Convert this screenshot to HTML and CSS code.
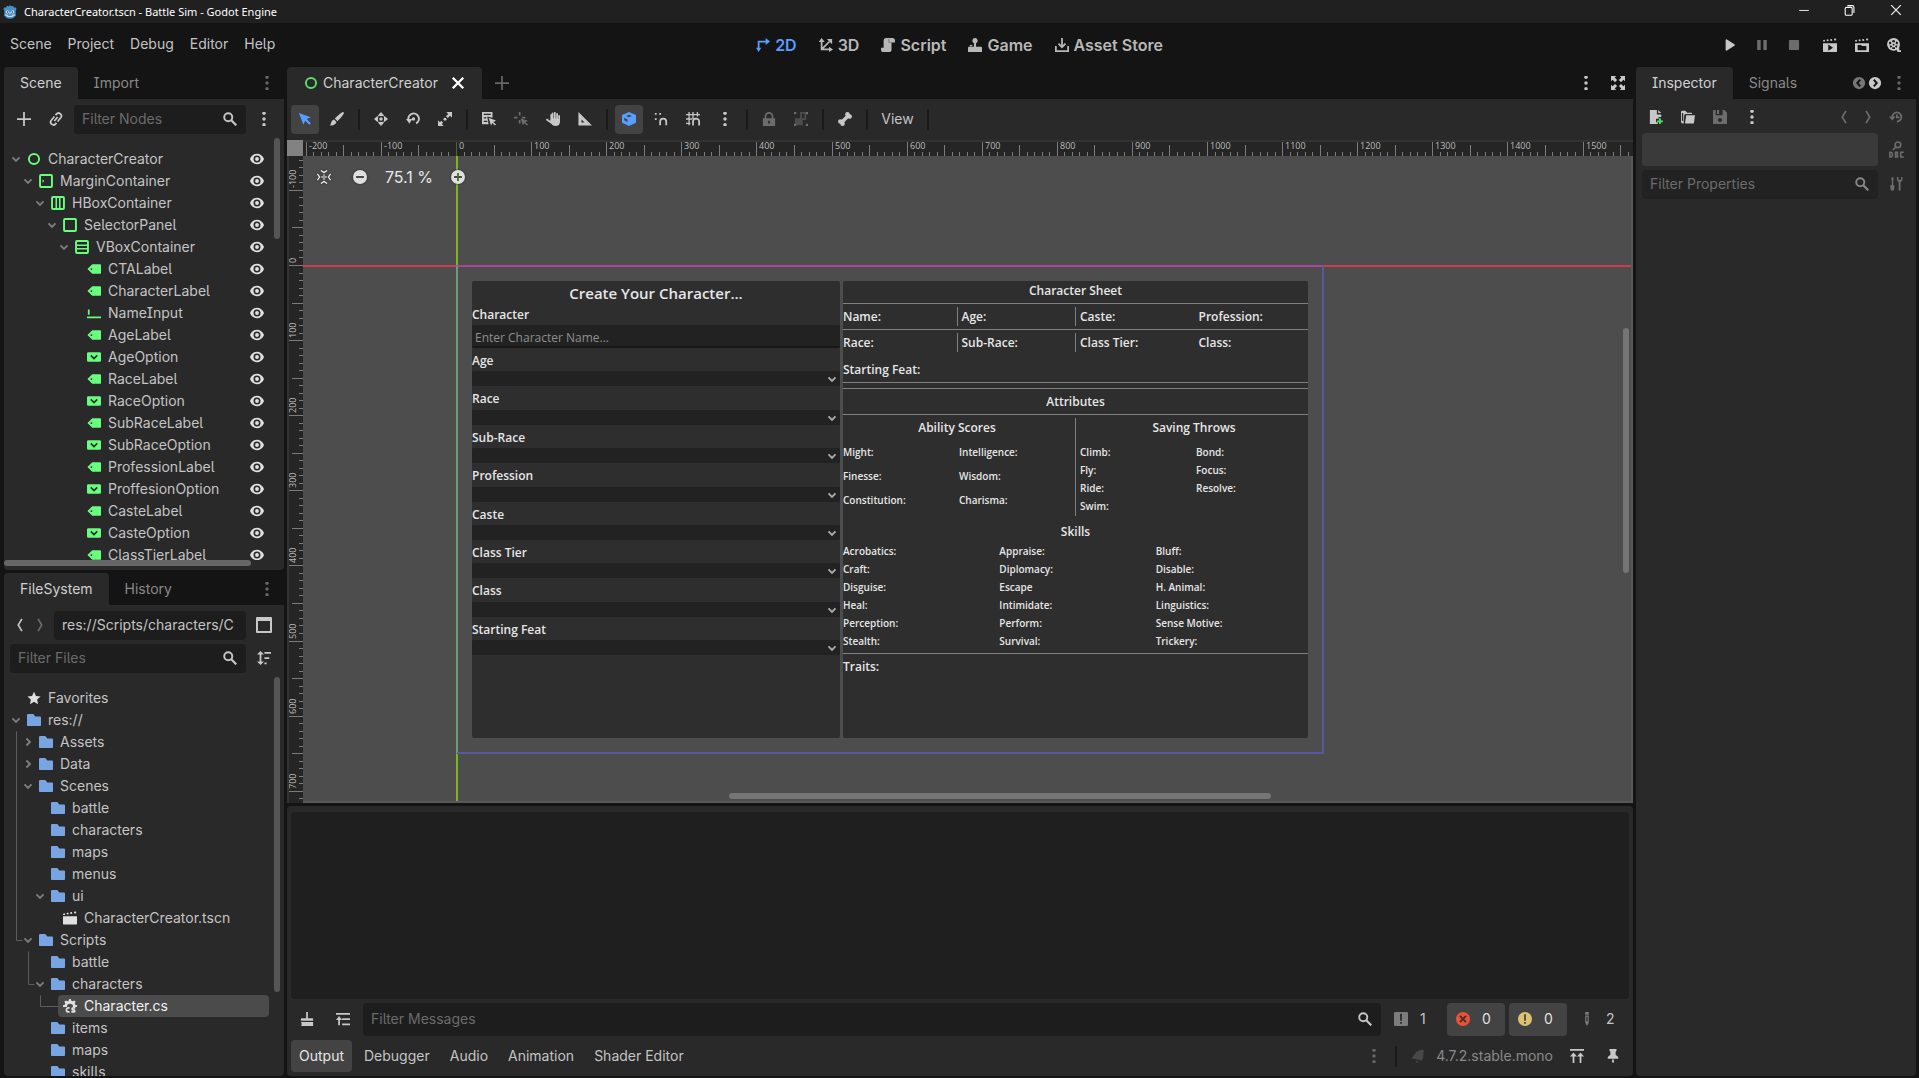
FILE: index.html
```html
<!DOCTYPE html>
<html lang="en">
<head>
<meta charset="utf-8">
<title>CharacterCreator.tscn - Battle Sim - Godot Engine</title>
<link rel="stylesheet" href="styles.css">
</head>
<body>
<svg class="sprite" aria-hidden="true">
  <symbol id="i-root" viewBox="0 0 16 16"><circle cx="8" cy="8" r="5.8" fill="none" stroke="currentColor" stroke-width="2.2"/></symbol>
  <symbol id="i-margin" viewBox="0 0 16 16"><rect x="1.2" y="1.2" width="13.6" height="13.6" rx="1" fill="none" stroke="currentColor" stroke-width="2.2"/><path d="M4 6l2 2-2 2z" fill="currentColor"/></symbol>
  <symbol id="i-hbox" viewBox="0 0 16 16"><rect x="1.2" y="1.2" width="13.6" height="13.6" rx="1" fill="none" stroke="currentColor" stroke-width="2.2"/><path d="M6 2v12M10 2v12" stroke="currentColor" stroke-width="1.8"/></symbol>
  <symbol id="i-panel" viewBox="0 0 16 16"><rect x="1.2" y="1.2" width="13.6" height="13.6" rx="1" fill="none" stroke="currentColor" stroke-width="2.2"/></symbol>
  <symbol id="i-vbox" viewBox="0 0 16 16"><rect x="1.2" y="1.2" width="13.6" height="13.6" rx="1" fill="none" stroke="currentColor" stroke-width="2.2"/><path d="M2 6h12M2 10h12" stroke="currentColor" stroke-width="1.8"/></symbol>
  <symbol id="i-label" viewBox="0 0 16 16"><path fill="currentColor" fill-rule="evenodd" d="M6 2.500L.5 8 6 13.500h9a1 1 0 001-1v-9a1 1 0 00-1-1zM5 7a1 1 0 110 2 1 1 0 010-2z"/></symbol>
  <symbol id="i-line" viewBox="0 0 16 16"><path fill="currentColor" d="M1 4h2v6H1zM0 12h16v2H0z"/></symbol>
  <symbol id="i-option" viewBox="0 0 16 16"><path fill="currentColor" fill-rule="evenodd" d="M1.500 2.500h13A1.500 1.500 0 0116 4v8a1.500 1.500 0 01-1.500 1.500h-13A1.500 1.500 0 010 12V4a1.500 1.500 0 011.500-1.500zM5 5.500L3.700 6.800 8 11l4.300-4.200L11 5.500l-3 3z"/></symbol>
  <symbol id="i-eye" viewBox="0 0 16 16"><path fill="currentColor" fill-rule="evenodd" d="M8 2C4.600 2 1.300 4.300 0 8c1.300 3.700 4.600 6 8 6s6.700-2.300 8-6C14.700 4.300 11.400 2 8 2zM8 4a4 4 0 110 8 4 4 0 010-8z"/><circle cx="8" cy="8" r="2.200" fill="currentColor"/></symbol>
  <symbol id="i-down" viewBox="0 0 16 16"><path d="M4 6.200l4 4 4-4" fill="none" stroke="currentColor" stroke-width="2.200"/></symbol>
  <symbol id="i-right" viewBox="0 0 16 16"><path d="M6.200 4l4 4-4 4" fill="none" stroke="currentColor" stroke-width="2.200"/></symbol>
  <symbol id="i-back" viewBox="0 0 16 16"><path d="M10.200 1L6 8l4.200 7" fill="none" stroke="currentColor" stroke-width="1.900"/></symbol>
  <symbol id="i-next" viewBox="0 0 16 16"><path d="M5.800 1L10 8l-4.200 7" fill="none" stroke="currentColor" stroke-width="1.900"/></symbol>
  <symbol id="i-dots" viewBox="0 0 16 16"><g fill="currentColor"><circle cx="8" cy="1.500" r="2"/><circle cx="8" cy="8" r="2"/><circle cx="8" cy="14.500" r="2"/></g></symbol>
  <symbol id="i-plus" viewBox="0 0 16 16"><path d="M8 0v16M0 8h16" stroke="currentColor" stroke-width="2"/></symbol>
  <symbol id="i-link" viewBox="0 0 16 16"><g transform="rotate(-50 8 8)" fill="none" stroke="currentColor" stroke-width="2"><path d="M9 4.800H3.500a3.200 3.200 0 000 6.400H5M7 11.200h5.500a3.200 3.200 0 000-6.400H11M5 8h6"/></g></symbol>
  <symbol id="i-search" viewBox="0 0 16 16"><circle cx="6" cy="6" r="4.600" fill="none" stroke="currentColor" stroke-width="2.200"/><path d="M9.200 9.200l6 6" stroke="currentColor" stroke-width="2.600"/></symbol>
  <symbol id="i-window" viewBox="0 0 16 16"><path fill="currentColor" fill-rule="evenodd" d="M1 0h14a1 1 0 011 1v14a1 1 0 01-1 1H1a1 1 0 01-1-1V1a1 1 0 011-1zM2 4v10h12V4z"/></symbol>
  <symbol id="i-sort" viewBox="0 0 16 16"><path fill="currentColor" d="M4 0l4 4H5v8h3l-4 4-4-4h3V4H0zM8.500 1H16v2H8.500zM8.500 7H14v2H8.500zM8.500 13H11v2H8.500z"/></symbol>
  <symbol id="i-star" viewBox="0 0 16 16"><path fill="currentColor" d="M8 .8l2.200 4.800 5.300.6-3.900 3.600 1 5.200L8 12.400 3.400 15l1-5.200L.5 6.200l5.300-.6z"/></symbol>
  <symbol id="i-folder" viewBox="0 0 16 16"><path fill="currentColor" d="M1.200 1h6L9.500 4H15a1 1 0 011 1v9a.8.8 0 01-.8.8H.8A.8.8 0 010 14V2.200A1.200 1.200 0 011.200 1z"/></symbol>
  <symbol id="i-clap" viewBox="0 0 16 16"><path fill="currentColor" d="M0 6h16v8.500a1 1 0 01-1 1H1a1 1 0 01-1-1zM0 3l2-.5.5 2H.3zM4 2.200l2-.5.5 2-2 .3zM8.200 1.500l2-.4.4 2-2 .3zM12.500.8L15 .5v2l-2 .3z"/></symbol>
  <symbol id="i-cs" viewBox="0 0 16 16"><path fill="currentColor" d="M7 0h2l.5 2 1.500.6L12.800 1.600l1.600 1.600L13.400 5l.6 1.500 2 .5v2h-4.500a3.500 3.500 0 00-7 0H0V7l2-.5L2.600 5 1.600 3.200l1.600-1.600L5 2.600 6.500 2z"/><path d="M7.500 10.200H6A2 2 0 004 12.500 2 2 0 006 14.800h1.500M14 10.200h-2.500c-1.500 0-1.500 2.200 0 2.200h.8c1.500 0 1.500 2.400 0 2.400H9.500" fill="none" stroke="currentColor" stroke-width="2"/></symbol>
  <symbol id="i-2d" viewBox="0 0 16 16"><path d="M3 12V4h9" fill="none" stroke="currentColor" stroke-width="2"/><path fill="currentColor" d="M11 0l5 4-5 4zM0 11l3 5 3-5z"/></symbol>
  <symbol id="i-3d" viewBox="0 0 16 16"><path d="M3 3v10h10M3 13l9-9" fill="none" stroke="currentColor" stroke-width="2"/><path fill="currentColor" d="M3 0l3.500 4.500h-7zM16 13l-4.500 3v-6zM15 1v6L9 1z"/></symbol>
  <symbol id="i-script" viewBox="0 0 16 16"><path fill="currentColor" d="M6 0h7a3 3 0 013 3v2h-4v8a3 3 0 01-3 3H3a3 3 0 01-3-3v-2h3V3a3 3 0 013-3z"/><path d="M9 1v4h3" fill="none" stroke="#777" stroke-width="1"/></symbol>
  <symbol id="i-game" viewBox="0 0 16 16"><path fill="currentColor" d="M8 0a3.200 3.200 0 011.200 6.100V10H15a1 1 0 011 1v5H0v-5a1 1 0 011-1h5.800V6.100A3.200 3.200 0 018 0zM2 8h3v1.500H2z"/></symbol>
  <symbol id="i-asset" viewBox="0 0 16 16"><path d="M1 9v6h14V9M8 0v10M4 6.500l4 4 4-4" fill="none" stroke="currentColor" stroke-width="2"/></symbol>
  <symbol id="i-play" viewBox="0 0 16 16"><path fill="currentColor" d="M3 2.500a1 1 0 011.500-.8l8.500 5.400a1 1 0 010 1.700l-8.500 5.400A1 1 0 013 13.500z"/></symbol>
  <symbol id="i-pause" viewBox="0 0 16 16"><path fill="currentColor" d="M2.500 2.200h4v11.600h-4zM9.500 2.200h4v11.600h-4z"/></symbol>
  <symbol id="i-stop" viewBox="0 0 16 16"><rect x="2.200" y="2.200" width="11.600" height="11.600" rx="1" fill="currentColor"/></symbol>
  <symbol id="i-playscene" viewBox="0 0 16 16"><path fill="currentColor" fill-rule="evenodd" d="M0 6h16v9a1 1 0 01-1 1H1a1 1 0 01-1-1zM6 7.500v7l5.500-3.500zM0 2.500L2 2l.5 2H.3zM4 2l2-.5.5 2-2 .3zM8.200 1.500l2-.4.4 2-2 .3zM12.500.8L15 .5v2l-2 .3z"/></symbol>
  <symbol id="i-playfolder" viewBox="0 0 16 16"><path fill="currentColor" fill-rule="evenodd" d="M0 6h16v9a1 1 0 01-1 1H1a1 1 0 01-1-1zM3 8v6h10V9H8L7 8zM0 2.500L2 2l.5 2H.3zM4 2l2-.5.5 2-2 .3zM8.200 1.500l2-.4.4 2-2 .3zM12.500.8L15 .5v2l-2 .3z"/></symbol>
  <symbol id="i-movie" viewBox="0 0 16 16"><path fill="currentColor" fill-rule="evenodd" d="M7.500 0A7.300 7.300 0 0114 10.500V14h2v2h-3.500a2 2 0 01-1.200-2.500A7.300 7.300 0 117.500 0zM6 2.500v2.300h3V2.500zM2.500 4.500v2.800l2.500-.8-.7-2.500zM10.500 4l-.7 2.500 2.500.8V4.500zM7.500 6.500a1 1 0 100 2 1 1 0 000-2zM3 8.700l1.200 2.600L6 9.500l-1.200-1zM10.200 8.500L9 9.500l1.800 1.800L12 8.700zM6 10.500v2h3v-2z"/></symbol>
  <symbol id="i-close" viewBox="0 0 16 16"><path d="M2 2l12 12M14 2L2 14" stroke="currentColor" stroke-width="2.700"/></symbol>
  <symbol id="i-full" viewBox="0 0 16 16"><path fill="currentColor" d="M0 0h6L4.200 1.800 7 4.600 4.600 7 1.800 4.200 0 6zM16 0v6l-1.800-1.800L11.400 7 9 4.600l2.800-2.800L10 0zM0 16v-6l1.800 1.800L4.600 9 7 11.400l-2.800 2.800L6 16zM16 16h-6l1.800-1.800L9 11.400 11.400 9l2.800 2.800L16 10z"/></symbol>
  <symbol id="i-select" viewBox="0 0 16 16"><path fill="currentColor" d="M1 1l5.200 13.500 2-4.600 4.700 4.700 1.800-1.800-4.700-4.700 4.600-2z"/></symbol>
  <symbol id="i-brush" viewBox="0 0 16 16"><path fill="currentColor" d="M14.500 0c.8 0 1.500.8 1.500 1.500C14 5 11 8.500 8.500 10.500l-3-3C8 4.500 11.500 1.800 14.500 0zM4.600 8.600l2.800 2.800C6.500 14.500 3.500 15.500 0 15.500c1.500-2 1-6 4.600-6.900z"/></symbol>
  <symbol id="i-move" viewBox="0 0 16 16"><path fill="currentColor" d="M8 0l3.200 3.600v1.200H4.800V3.600zM8 16l-3.200-3.600v-1.200h6.400v1.200zM0 8l3.600-3.200h1.200v6.400H3.600zM16 8l-3.600 3.200h-1.200V4.800h1.200z"/><circle cx="8" cy="8" r="3.400" fill="#292929"/><circle cx="8" cy="8" r="2" fill="currentColor"/></symbol>
  <symbol id="i-rotate" viewBox="0 0 16 16"><path d="M3 9.500A6 6 0 1111.500 13" fill="none" stroke="currentColor" stroke-width="2.200"/><path fill="currentColor" d="M0 8h7l-3 5.500z"/><circle cx="8.500" cy="8" r="2" fill="currentColor"/></symbol>
  <symbol id="i-scale" viewBox="0 0 16 16"><path fill="currentColor" d="M9.500 0H16v6.500l-2.200-2.200-2.600 2.600-2.100-2.100 2.600-2.600zM0 9.500l2.200 2.200 1.600-1.600 2.100 2.100-1.600 1.600L6.500 16H0z"/><circle cx="8" cy="8.300" r="1.700" fill="currentColor"/></symbol>
  <symbol id="i-list" viewBox="0 0 16 16"><path fill="currentColor" fill-rule="evenodd" d="M0 0h12v6.500L6 5l1.500 9H0zM2 2v1.500h8V2zM2 6v1.500h3V6zM2 10v1.500h4V10z"/><path fill="currentColor" d="M7.500 6.500l2.800 9 1.500-3 3 3 1.200-1.200-3-3 3-1.500z"/></symbol>
  <symbol id="i-pivot" viewBox="0 0 16 16"><path d="M6.500 0v4M0 6.500h4M9 6.500h4M6.500 9v4" stroke="currentColor" stroke-width="2"/><path fill="currentColor" d="M7.500 7.500l2.800 8 1.500-3 3 3 1.200-1.200-3-3 3-1.300z"/></symbol>
  <symbol id="i-hand" viewBox="0 0 16 16"><path fill="currentColor" d="M6.500 1.500a1 1 0 012 0V7h.6V.9a1 1 0 012 0V7h.6V2a1 1 0 012 0v6h.3V4.500a1 1 0 012 0V11c0 3-2 5-5 5-2.500 0-3.500-.5-5-2.500L.3 9.300c-.6-1 .8-2 1.700-1.200L4.600 10l.4-.5V2.800a1 1 0 011.500-.3z"/></symbol>
  <symbol id="i-ruler" viewBox="0 0 16 16"><path fill="currentColor" fill-rule="evenodd" d="M.5 0L16 15.500H.5zM4 8.500V12h3.500z"/></symbol>
  <symbol id="i-cube" viewBox="0 0 16 16"><path fill="currentColor" fill-rule="evenodd" d="M8 0l8 3.500v8.800L8 16 0 12.300V3.500zM2.500 6.500v3l3.800 1.900V8.600zM8 3L4.800 4.500 8 6l3.200-1.500z"/></symbol>
  <symbol id="i-snap" viewBox="0 0 16 16"><path d="M7 15v-4a3.500 3.500 0 017 0v4" fill="none" stroke="currentColor" stroke-width="2"/><path fill="currentColor" d="M1 1h2v2H1zM6 1h2v2H6zM1 7h2v2H1z"/></symbol>
  <symbol id="i-grid" viewBox="0 0 16 16"><path d="M3.500 0v15M8 0v8M13 0v5M0 3h16M0 8h7M0 13h5" stroke="currentColor" stroke-width="1.500" fill="none"/><path d="M8 15.500V11a3.500 3.500 0 017 0v4.500" fill="none" stroke="currentColor" stroke-width="2"/></symbol>
  <symbol id="i-lock" viewBox="0 0 16 16"><path fill="currentColor" fill-rule="evenodd" d="M8 0a5 5 0 015 5v2h2v9H1V7h2V5a5 5 0 015-5zM8 2a3 3 0 00-3 3v2h6V5a3 3 0 00-3-3zM7 10v3h2v-3z"/></symbol>
  <symbol id="i-group" viewBox="0 0 16 16"><path fill="currentColor" d="M0 0h2.500v2.500H0zM13.500 0H16v2.500h-2.500zM0 13.500h2.500V16H0zM13.500 13.500H16V16h-2.500z"/><path fill="currentColor" opacity=".55" fill-rule="evenodd" d="M7 0h7v9h-4v6H1V7h6zM9 2v5h3V2z"/></symbol>
  <symbol id="i-bone" viewBox="0 0 16 16"><path d="M4.500 11.500l7-7" stroke="currentColor" stroke-width="4"/><g fill="currentColor"><circle cx="10.800" cy="2.700" r="2.600"/><circle cx="13.300" cy="5.200" r="2.600"/><circle cx="2.700" cy="10.800" r="2.600"/><circle cx="5.200" cy="13.300" r="2.600"/></g></symbol>
  <symbol id="i-center" viewBox="0 0 16 16"><path d="M.5 4.500L3 8 .5 11.500M15.500 4.500L13 8l2.500 3.500M4.500.5L8 3 11.500.5M4.500 15.500L8 13l3.500 2.500" fill="none" stroke="currentColor" stroke-width="1.500"/><path fill="currentColor" d="M5 7.200h1.600v1.600H5zM7.200 7.200h1.600v1.600H7.200zM9.400 7.200H11v1.600H9.400zM7.200 5h1.600v1.600H7.200zM7.200 9.400h1.600V11H7.200z"/></symbol>
  <symbol id="i-zoomout" viewBox="0 0 16 16"><circle cx="8" cy="8" r="8" fill="#e0e0e0"/><path d="M3.500 8h9" stroke="#333" stroke-width="2"/></symbol>
  <symbol id="i-zoomin" viewBox="0 0 16 16"><circle cx="8" cy="8" r="8" fill="#e0e0e0"/><path d="M3.500 8h9" stroke="#333" stroke-width="2"/><path d="M8 3.500v9" stroke="#4a6b12" stroke-width="2"/></symbol>
  <symbol id="i-cleft" viewBox="0 0 16 16"><path fill="currentColor" fill-rule="evenodd" d="M8 1a7 7 0 110 14A7 7 0 018 1zM8.500 3.500L4.500 8l4 4.500 1.700-1.500L7.500 8l2.700-3z"/></symbol>
  <symbol id="i-cright" viewBox="0 0 16 16"><path fill="currentColor" fill-rule="evenodd" d="M8 1a7 7 0 110 14A7 7 0 018 1zM7.500 3.500L5.800 5l2.700 3-2.700 3 1.700 1.500 4-4.500z"/></symbol>
  <symbol id="i-new" viewBox="0 0 16 16"><path fill="currentColor" d="M1 0h8v5h5v3h-3v2H8v4h2v2H1zM10.500 0L14 3.500h-3.500z"/><path d="M12.500 9.500v7M9 13h7" stroke="#45e05c" stroke-width="2.200"/></symbol>
  <symbol id="i-open" viewBox="0 0 16 16"><path fill="currentColor" d="M0 2.500C0 1 1 .8 2 .8h3L7 3h5.500v1.500H5.500C4 4.500 3.800 6 3.600 7L3 15.500C1 15.500 0 14.500 0 13zM6 6h10l-1.200 8.500a1.200 1.200 0 01-1.200 1H4.500z"/><path d="M1.800 3.500v9" stroke="#292929" stroke-width="1.600"/></symbol>
  <symbol id="i-save" viewBox="0 0 16 16"><path fill="currentColor" fill-rule="evenodd" d="M1 0h2v6h8V0h2l3 3v12a1 1 0 01-1 1H1a1 1 0 01-1-1V1a1 1 0 011-1zM8 9a2.300 2.300 0 100 4.600A2.300 2.300 0 008 9zM4.500 0H7v4.500H4.500z"/></symbol>
  <symbol id="i-history" viewBox="0 0 16 16"><path d="M3.800 8a5.200 5.200 0 115.200 5.200M9 5v3.500h3" fill="none" stroke="currentColor" stroke-width="2"/><path fill="currentColor" d="M0 7.500h7.500L3.800 12z"/></symbol>
  <symbol id="i-doc" viewBox="0 0 16 18"><circle cx="9.500" cy="4" r="3" fill="none" stroke="currentColor" stroke-width="1.800"/><path d="M7.500 6.200L4 9.500M.9 12v5H2a1.600 1.600 0 001.600-1.600v-1.800A1.600 1.600 0 002 12zM7 12h2v5H7zM15.800 12h-3.300v5h3.300" fill="none" stroke="currentColor" stroke-width="1.700"/></symbol>
  <symbol id="i-tools" viewBox="0 0 16 16"><path fill="currentColor" d="M3.200 0h1.600l.6 3-.6 1v5H6v4.500a2.200 2.200 0 01-4.400 0V9h1.600V4l-.6-1zM9 0v3.500L11 6v9.500h2.200V6L15.500 3.500V0h-1.700v3h-3V0z"/></symbol>
  <symbol id="i-clear" viewBox="0 0 16 16"><path fill="currentColor" d="M7 0h2v7h5a1 1 0 011 1v2H1V8a1 1 0 011-1h5zM1 11.500h14L15 16H1c1.300-1 1-3 0-4.500z"/></symbol>
  <symbol id="i-collapse" viewBox="0 0 16 16"><path fill="currentColor" d="M0 1h16v2H0zM7 7h9v2H7zM7 13h9v2H7zM3.500 4.500L7 9H4.500v6h-2V9H0z"/></symbol>
  <symbol id="i-msg" viewBox="0 0 16 16"><path fill="currentColor" fill-rule="evenodd" d="M1.500 0h13A1.500 1.500 0 0116 1.500v13a1.500 1.500 0 01-1.500 1.500h-13A1.500 1.500 0 010 14.500v-13A1.500 1.500 0 011.500 0zM7 2v8h2V2zM7 11.500v2h2v-2z"/></symbol>
  <symbol id="i-error" viewBox="0 0 16 16"><circle cx="8" cy="8" r="8" fill="#ec5038"/><path d="M4.500 4.500l7 7M11.500 4.500l-7 7" stroke="#43302e" stroke-width="2.200"/></symbol>
  <symbol id="i-warn" viewBox="0 0 16 16"><circle cx="8" cy="8" r="8" fill="#dcc170"/><path d="M7 2.500h2v7.500H7zM7 11.500h2v2H7z" fill="#444"/></symbol>
  <symbol id="i-pen" viewBox="0 0 16 16"><path fill="currentColor" fill-rule="evenodd" d="M6 0h4v3H6zM6 4h4v8l-2 4-2-4zM7.300 5.500v5h1.400v-5z"/></symbol>
  <symbol id="i-bell" viewBox="0 0 16 16"><path fill="currentColor" d="M12.500.5l2 1-.5 8-1.500 3.500L0 10.500C4 9 4.500 2 10.500 1.500zM5 13l4 1.500c-1 2-4 1-4-1.500z"/></symbol>
  <symbol id="i-expand" viewBox="0 0 16 16"><path fill="currentColor" d="M0 0h16v2H0zM4 4l4 4.500H5V16H3V8.500H0zM12 4l4 4.500h-3V16h-2V8.500H8z"/></symbol>
  <symbol id="i-pin" viewBox="0 0 16 16"><path fill="currentColor" d="M4 0h8v2l-1 1v3.500l3 2.500v2H2V9l3-2.500V3L4 2zM7 12h2v3l-1 1-1-1z"/></symbol>
  <symbol id="i-godot" viewBox="0 0 16 16"><path fill="#4a90c8" d="M4.500.8L7 1.800V.5h2v1.300l2.500-1 1 2.200 1.800-.3 1.200 2-1 2V12c-1.500 2.500-4 3.700-6.500 3.700S3 14.500 1.500 12V6.700l-1-2 1.200-2 1.800.3z"/><g fill="#e8eef4"><circle cx="5" cy="8" r="1.700"/><circle cx="11" cy="8" r="1.700"/><path d="M7.500 8h1v2.500h-1z"/></g><path d="M2 11.500h3v1.500h6v-1.500h3" fill="none" stroke="#e8eef4" stroke-width="1"/><g fill="#333"><circle cx="5.200" cy="8" r=".9"/><circle cx="10.800" cy="8" r=".9"/></g></symbol>
  <symbol id="i-min" viewBox="0 0 16 16"><path d="M2.500 8.500h11" stroke="currentColor"/></symbol>
  <symbol id="i-restore" viewBox="0 0 16 16"><rect x="2.500" y="5" width="8" height="9" rx="1.500" fill="none" stroke="currentColor" stroke-width="1.200"/><path d="M5 3h5.500a2 2 0 012 2v6.500" fill="none" stroke="currentColor" stroke-width="1.200"/></symbol>
  <symbol id="i-x" viewBox="0 0 16 16"><path d="M2.500 2.500l11 11M13.500 2.500l-11 11" stroke="currentColor" stroke-width="1.200"/></symbol>
</svg>

<header class="titlebar">
  <svg class="icon"><use href="#i-godot"/></svg>
  <span class="window-title">CharacterCreator.tscn - Battle Sim - Godot Engine</span>
  <button class="win-btn" aria-label="Minimize"><svg class="icon"><use href="#i-min"/></svg></button>
  <button class="win-btn" aria-label="Restore"><svg class="icon"><use href="#i-restore"/></svg></button>
  <button class="win-btn" aria-label="Close"><svg class="icon"><use href="#i-x"/></svg></button>
</header>

<div class="menubar">
  <nav class="menus">
    <button>Scene</button><button>Project</button><button>Debug</button><button>Editor</button><button>Help</button>
  </nav>
  <nav class="screens">
    <button class="active"><svg class="icon"><use href="#i-2d"/></svg>2D</button>
    <button><svg class="icon"><use href="#i-3d"/></svg>3D</button>
    <button><svg class="icon"><use href="#i-script"/></svg>Script</button>
    <button><svg class="icon"><use href="#i-game"/></svg>Game</button>
    <button><svg class="icon"><use href="#i-asset"/></svg>Asset Store</button>
  </nav>
  <div class="runbar">
    <button class="tool" aria-label="Play"><svg class="icon"><use href="#i-play"/></svg></button>
    <button class="tool off" aria-label="Pause"><svg class="icon"><use href="#i-pause"/></svg></button>
    <button class="tool off" aria-label="Stop"><svg class="icon"><use href="#i-stop"/></svg></button>
    <span class="run-gap"></span>
    <button class="tool" aria-label="Play scene"><svg class="icon"><use href="#i-playscene"/></svg></button>
    <button class="tool" aria-label="Play custom scene"><svg class="icon"><use href="#i-playfolder"/></svg></button>
    <button class="tool" aria-label="Movie maker"><svg class="icon"><use href="#i-movie"/></svg></button>
  </div>
</div>

<main class="workspace">
  <div class="column">
    <section class="dock">
      <div class="tabs">
        <button class="tab active">Scene</button><button class="tab">Import</button>
        <button class="tool faint push" aria-label="Dock options"><svg class="icon"><use href="#i-dots"/></svg></button>
      </div>
      <div class="dock-body">
        <div class="dock-row first">
          <button class="tool" aria-label="Add node"><svg class="icon"><use href="#i-plus"/></svg></button>
          <button class="tool" aria-label="Instantiate scene"><svg class="icon"><use href="#i-link"/></svg></button>
          <label class="field"><input type="text" placeholder="Filter Nodes" aria-label="Filter Nodes"><svg class="icon"><use href="#i-search"/></svg></label>
          <button class="tool" aria-label="More"><svg class="icon"><use href="#i-dots"/></svg></button>
        </div>
        <div class="tree scene-tree">
          <ul>
            <li class="d0"><svg class="icon arrow"><use href="#i-down"/></svg><svg class="icon node"><use href="#i-root"/></svg>CharacterCreator<svg class="icon eye"><use href="#i-eye"/></svg></li>
            <li class="d1"><svg class="icon arrow"><use href="#i-down"/></svg><svg class="icon node"><use href="#i-margin"/></svg>MarginContainer<svg class="icon eye"><use href="#i-eye"/></svg></li>
            <li class="d2"><svg class="icon arrow"><use href="#i-down"/></svg><svg class="icon node"><use href="#i-hbox"/></svg>HBoxContainer<svg class="icon eye"><use href="#i-eye"/></svg></li>
            <li class="d3"><svg class="icon arrow"><use href="#i-down"/></svg><svg class="icon node"><use href="#i-panel"/></svg>SelectorPanel<svg class="icon eye"><use href="#i-eye"/></svg></li>
            <li class="d4"><svg class="icon arrow"><use href="#i-down"/></svg><svg class="icon node"><use href="#i-vbox"/></svg>VBoxContainer<svg class="icon eye"><use href="#i-eye"/></svg></li>
            <li class="d5"><span class="arrow"></span><svg class="icon node"><use href="#i-label"/></svg>CTALabel<svg class="icon eye"><use href="#i-eye"/></svg></li>
            <li class="d5"><span class="arrow"></span><svg class="icon node"><use href="#i-label"/></svg>CharacterLabel<svg class="icon eye"><use href="#i-eye"/></svg></li>
            <li class="d5"><span class="arrow"></span><svg class="icon node"><use href="#i-line"/></svg>NameInput<svg class="icon eye"><use href="#i-eye"/></svg></li>
            <li class="d5"><span class="arrow"></span><svg class="icon node"><use href="#i-label"/></svg>AgeLabel<svg class="icon eye"><use href="#i-eye"/></svg></li>
            <li class="d5"><span class="arrow"></span><svg class="icon node"><use href="#i-option"/></svg>AgeOption<svg class="icon eye"><use href="#i-eye"/></svg></li>
            <li class="d5"><span class="arrow"></span><svg class="icon node"><use href="#i-label"/></svg>RaceLabel<svg class="icon eye"><use href="#i-eye"/></svg></li>
            <li class="d5"><span class="arrow"></span><svg class="icon node"><use href="#i-option"/></svg>RaceOption<svg class="icon eye"><use href="#i-eye"/></svg></li>
            <li class="d5"><span class="arrow"></span><svg class="icon node"><use href="#i-label"/></svg>SubRaceLabel<svg class="icon eye"><use href="#i-eye"/></svg></li>
            <li class="d5"><span class="arrow"></span><svg class="icon node"><use href="#i-option"/></svg>SubRaceOption<svg class="icon eye"><use href="#i-eye"/></svg></li>
            <li class="d5"><span class="arrow"></span><svg class="icon node"><use href="#i-label"/></svg>ProfessionLabel<svg class="icon eye"><use href="#i-eye"/></svg></li>
            <li class="d5"><span class="arrow"></span><svg class="icon node"><use href="#i-option"/></svg>ProffesionOption<svg class="icon eye"><use href="#i-eye"/></svg></li>
            <li class="d5"><span class="arrow"></span><svg class="icon node"><use href="#i-label"/></svg>CasteLabel<svg class="icon eye"><use href="#i-eye"/></svg></li>
            <li class="d5"><span class="arrow"></span><svg class="icon node"><use href="#i-option"/></svg>CasteOption<svg class="icon eye"><use href="#i-eye"/></svg></li>
            <li class="d5"><span class="arrow"></span><svg class="icon node"><use href="#i-label"/></svg>ClassTierLabel<svg class="icon eye"><use href="#i-eye"/></svg></li>
          </ul>
          <span class="vbar scene-vbar"></span>
        </div>
        <span class="hbar scene-hbar"></span>
      </div>
    </section>

    <section class="dock">
      <div class="tabs">
        <button class="tab active">FileSystem</button><button class="tab">History</button>
        <button class="tool faint push" aria-label="Dock options"><svg class="icon"><use href="#i-dots"/></svg></button>
      </div>
      <div class="dock-body">
        <div class="dock-row first">
          <button class="nav" aria-label="Back"><svg class="icon"><use href="#i-back"/></svg></button>
          <button class="nav off joined" aria-label="Forward"><svg class="icon"><use href="#i-next"/></svg></button>
          <label class="field"><input type="text" value="res://Scripts/characters/C" aria-label="Path"></label>
          <button class="tool" aria-label="Split mode"><svg class="icon big"><use href="#i-window"/></svg></button>
        </div>
        <div class="dock-row inset">
          <label class="field"><input type="text" placeholder="Filter Files" aria-label="Filter Files"><svg class="icon"><use href="#i-search"/></svg></label>
          <button class="tool" aria-label="Sort files"><svg class="icon"><use href="#i-sort"/></svg></button>
        </div>
        <div class="tree file-tree">
          <svg class="guides" width="60" height="340"><path d="M12.500 58.500v209h6M24.500 278.500v33h6M36.500 322.500v11h18" fill="none" stroke="#5c5c5c"/></svg>
          <ul>
            <li class="d0"><span class="arrow"></span><svg class="icon light"><use href="#i-star"/></svg>Favorites</li>
            <li class="d0"><svg class="icon arrow"><use href="#i-down"/></svg><svg class="icon folder"><use href="#i-folder"/></svg>res://</li>
            <li class="d1"><svg class="icon arrow"><use href="#i-right"/></svg><svg class="icon folder"><use href="#i-folder"/></svg>Assets</li>
            <li class="d1"><svg class="icon arrow"><use href="#i-right"/></svg><svg class="icon folder"><use href="#i-folder"/></svg>Data</li>
            <li class="d1"><svg class="icon arrow"><use href="#i-down"/></svg><svg class="icon folder"><use href="#i-folder"/></svg>Scenes</li>
            <li class="d2"><span class="arrow"></span><svg class="icon folder"><use href="#i-folder"/></svg>battle</li>
            <li class="d2"><span class="arrow"></span><svg class="icon folder"><use href="#i-folder"/></svg>characters</li>
            <li class="d2"><span class="arrow"></span><svg class="icon folder"><use href="#i-folder"/></svg>maps</li>
            <li class="d2"><span class="arrow"></span><svg class="icon folder"><use href="#i-folder"/></svg>menus</li>
            <li class="d2"><svg class="icon arrow"><use href="#i-down"/></svg><svg class="icon folder"><use href="#i-folder"/></svg>ui</li>
            <li class="d3"><span class="arrow"></span><svg class="icon light"><use href="#i-clap"/></svg>CharacterCreator.tscn</li>
            <li class="d1"><svg class="icon arrow"><use href="#i-down"/></svg><svg class="icon folder"><use href="#i-folder"/></svg>Scripts</li>
            <li class="d2"><span class="arrow"></span><svg class="icon folder"><use href="#i-folder"/></svg>battle</li>
            <li class="d2"><svg class="icon arrow"><use href="#i-down"/></svg><svg class="icon folder"><use href="#i-folder"/></svg>characters</li>
            <li class="picked"><svg class="icon light"><use href="#i-cs"/></svg>Character.cs</li>
            <li class="d2"><span class="arrow"></span><svg class="icon folder"><use href="#i-folder"/></svg>items</li>
            <li class="d2"><span class="arrow"></span><svg class="icon folder"><use href="#i-folder"/></svg>maps</li>
            <li class="d2"><span class="arrow"></span><svg class="icon folder"><use href="#i-folder"/></svg>skills</li>
          </ul>
          <span class="vbar file-vbar"></span>
        </div>
      </div>
    </section>
  </div>

  <div class="column">
    <section class="editor">
      <div class="tabs">
        <div class="tab active scene-tab"><svg class="icon"><use href="#i-root"/></svg><span>CharacterCreator</span><button class="close" aria-label="Close tab"><svg class="icon"><use href="#i-close"/></svg></button></div>
        <button class="tool faint add-tab" aria-label="New scene"><svg class="icon"><use href="#i-plus"/></svg></button>
        <button class="tool push" aria-label="Scene list"><svg class="icon"><use href="#i-dots"/></svg></button>
        <button class="tool" aria-label="Distraction free mode"><svg class="icon"><use href="#i-full"/></svg></button>
      </div>
      <div class="toolbar">
        <button class="tool on" aria-label="Select"><svg class="icon"><use href="#i-select"/></svg></button>
        <button class="tool" aria-label="Paint"><svg class="icon"><use href="#i-brush"/></svg></button>
        <span class="sep"></span>
        <button class="tool" aria-label="Move"><svg class="icon"><use href="#i-move"/></svg></button>
        <button class="tool" aria-label="Rotate"><svg class="icon"><use href="#i-rotate"/></svg></button>
        <button class="tool" aria-label="Scale"><svg class="icon"><use href="#i-scale"/></svg></button>
        <span class="sep"></span>
        <button class="tool" aria-label="List select"><svg class="icon"><use href="#i-list"/></svg></button>
        <button class="tool off" aria-label="Pivot"><svg class="icon"><use href="#i-pivot"/></svg></button>
        <button class="tool" aria-label="Pan"><svg class="icon"><use href="#i-hand"/></svg></button>
        <button class="tool" aria-label="Ruler"><svg class="icon"><use href="#i-ruler"/></svg></button>
        <span class="sep"></span>
        <button class="tool on" aria-label="Local space"><svg class="icon"><use href="#i-cube"/></svg></button>
        <button class="tool" aria-label="Smart snap"><svg class="icon"><use href="#i-snap"/></svg></button>
        <button class="tool" aria-label="Grid snap"><svg class="icon"><use href="#i-grid"/></svg></button>
        <button class="tool" aria-label="Snap options"><svg class="icon"><use href="#i-dots"/></svg></button>
        <span class="sep"></span>
        <button class="tool off" aria-label="Lock"><svg class="icon"><use href="#i-lock"/></svg></button>
        <button class="tool off" aria-label="Group"><svg class="icon"><use href="#i-group"/></svg></button>
        <span class="sep"></span>
        <button class="tool" aria-label="Skeleton"><svg class="icon"><use href="#i-bone"/></svg></button>
        <span class="sep"></span>
        <button class="view-btn">View</button>
        <span class="sep"></span>
      </div>
      <div class="viewport">
        <div class="corner"></div>
        <svg class="ruler ruler-x" id="ruler-x"></svg>
        <svg class="ruler ruler-y" id="ruler-y"></svg>
        <div class="canvas">
          <span class="axis-x"></span>
          <span class="axis-y"></span>
          <div class="scene-frame">
            <div class="game-panel creator">
              <h1>Create Your Character...</h1>
              <label for="cname">Character</label>
              <input id="cname" type="text" placeholder="Enter Character Name...">
              <div class="options">
                <div class="opt"><label for="o1">Age</label><div class="pick"><select id="o1"></select><svg class="icon"><use href="#i-down"/></svg></div></div>
                <div class="opt"><label for="o2">Race</label><div class="pick"><select id="o2"></select><svg class="icon"><use href="#i-down"/></svg></div></div>
                <div class="opt"><label for="o3">Sub-Race</label><div class="pick"><select id="o3"></select><svg class="icon"><use href="#i-down"/></svg></div></div>
                <div class="opt"><label for="o4">Profession</label><div class="pick"><select id="o4"></select><svg class="icon"><use href="#i-down"/></svg></div></div>
                <div class="opt"><label for="o5">Caste</label><div class="pick"><select id="o5"></select><svg class="icon"><use href="#i-down"/></svg></div></div>
                <div class="opt"><label for="o6">Class Tier</label><div class="pick"><select id="o6"></select><svg class="icon"><use href="#i-down"/></svg></div></div>
                <div class="opt"><label for="o7">Class</label><div class="pick"><select id="o7"></select><svg class="icon"><use href="#i-down"/></svg></div></div>
                <div class="opt"><label for="o8">Starting Feat</label><div class="pick"><select id="o8"></select><svg class="icon"><use href="#i-down"/></svg></div></div>
              </div>
            </div>
            <div class="game-panel sheet">
              <h2 class="sheet-title">Character Sheet</h2>
              <div class="facts"><span>Name:</span><i></i><span>Age:</span><i></i><span>Caste:</span><i class="blank"></i><span>Profession:</span></div>
              <div class="facts"><span>Race:</span><i></i><span>Sub-Race:</span><i></i><span>Class Tier:</span><i class="blank"></i><span>Class:</span></div>
              <div class="feat">Starting Feat:</div>
              <div class="rule-gap"></div>
              <h2 class="attributes">Attributes</h2>
              <div class="halves">
                <div class="half">
                  <h3>Ability Scores</h3>
                  <div class="pairs wide"><span>Might:</span><span>Intelligence:</span><span>Finesse:</span><span>Wisdom:</span><span>Constitution:</span><span>Charisma:</span></div>
                </div>
                <i></i>
                <div class="half">
                  <h3>Saving Throws</h3>
                  <div class="pairs"><span>Climb:</span><span>Bond:</span><span>Fly:</span><span>Focus:</span><span>Ride:</span><span>Resolve:</span><span>Swim:</span></div>
                </div>
              </div>
              <h3 class="skills-title">Skills</h3>
              <div class="skills"><span>Acrobatics:</span><span>Appraise:</span><span>Bluff:</span><span>Craft:</span><span>Diplomacy:</span><span>Disable:</span><span>Disguise:</span><span>Escape</span><span>H. Animal:</span><span>Heal:</span><span>Intimidate:</span><span>Linguistics:</span><span>Perception:</span><span>Perform:</span><span>Sense Motive:</span><span>Stealth:</span><span>Survival:</span><span>Trickery:</span></div>
              <div class="traits">Traits:</div>
            </div>
          </div>
          <div class="zoom">
            <button aria-label="Center view"><svg class="icon"><use href="#i-center"/></svg></button>
            <button aria-label="Zoom out"><svg class="icon"><use href="#i-zoomout"/></svg></button>
            <button class="zoom-value">75.1 %</button>
            <button aria-label="Zoom in"><svg class="icon"><use href="#i-zoomin"/></svg></button>
          </div>
          <span class="canvas-vbar"></span>
          <span class="canvas-hbar"></span>
        </div>
      </div>
    </section>

    <section class="bottom">
      <div class="log"></div>
      <div class="log-tools">
        <button class="tool" aria-label="Clear"><svg class="icon"><use href="#i-clear"/></svg></button>
        <button class="tool" aria-label="Collapse"><svg class="icon"><use href="#i-collapse"/></svg></button>
        <label class="field"><input type="text" placeholder="Filter Messages" aria-label="Filter Messages"><svg class="icon"><use href="#i-search"/></svg></label>
        <button class="count"><svg class="icon dim"><use href="#i-msg"/></svg>1</button>
        <button class="count on"><svg class="icon"><use href="#i-error"/></svg>0</button>
        <button class="count on"><svg class="icon"><use href="#i-warn"/></svg>0</button>
        <button class="count"><svg class="icon dim"><use href="#i-pen"/></svg>2</button>
      </div>
      <div class="bottom-tabs">
        <button class="btab on">Output</button><button class="btab">Debugger</button><button class="btab">Audio</button><button class="btab">Animation</button><button class="btab">Shader Editor</button>
        <button class="tool faint push" aria-label="More"><svg class="icon"><use href="#i-dots"/></svg></button>
        <span class="sep"></span>
        <button class="tool ghost" aria-label="Notifications"><svg class="icon"><use href="#i-bell"/></svg></button>
        <button class="version">4.7.2.stable.mono</button>
        <button class="tool" aria-label="Expand"><svg class="icon"><use href="#i-expand"/></svg></button>
        <button class="tool spaced" aria-label="Pin"><svg class="icon"><use href="#i-pin"/></svg></button>
      </div>
    </section>
  </div>

  <section class="dock">
    <div class="tabs">
      <button class="tab active">Inspector</button><button class="tab">Signals</button>
      <div class="tab-scroll push">
        <button class="mid" aria-label="Previous tabs"><svg class="icon"><use href="#i-cleft"/></svg></button>
        <button aria-label="Next tabs"><svg class="icon"><use href="#i-cright"/></svg></button>
      </div>
      <button class="tool faint" aria-label="Dock options"><svg class="icon"><use href="#i-dots"/></svg></button>
    </div>
    <div class="dock-body inspector">
      <div class="dock-row resource-row">
        <button class="tool" aria-label="New resource"><svg class="icon"><use href="#i-new"/></svg></button>
        <button class="tool" aria-label="Open resource"><svg class="icon"><use href="#i-open"/></svg></button>
        <button class="tool off" aria-label="Save resource"><svg class="icon"><use href="#i-save"/></svg></button>
        <button class="tool" aria-label="Resource options"><svg class="icon"><use href="#i-dots"/></svg></button>
        <button class="nav off push" aria-label="Back"><svg class="icon"><use href="#i-back"/></svg></button>
        <button class="nav off" aria-label="Forward"><svg class="icon"><use href="#i-next"/></svg></button>
        <button class="tool off" aria-label="History"><svg class="icon"><use href="#i-history"/></svg></button>
      </div>
      <div class="dock-row">
        <button class="object" aria-label="Edited object"></button>
        <button class="tool off" aria-label="Documentation"><svg class="icon tall"><use href="#i-doc"/></svg></button>
      </div>
      <div class="dock-row">
        <label class="field dimmed"><input type="text" placeholder="Filter Properties" aria-label="Filter Properties"><svg class="icon"><use href="#i-search"/></svg></label>
        <button class="tool off" aria-label="Property tools"><svg class="icon"><use href="#i-tools"/></svg></button>
      </div>
    </div>
  </section>
</main>
<script src="rulers.js"></script>
</body>
</html>
```

FILE: styles.css
```css
* { box-sizing: border-box; }

body {
  margin: 0;
  height: 100vh;
  display: flex;
  flex-direction: column;
  overflow: hidden;
  background: #141414;
  color: #c4c4c4;
  font-family: Inter, "Liberation Sans", sans-serif;
  font-size: 14px;
  line-height: 22px;
  font-feature-settings: "cv05", "cv08";
}

button, input, select {
  font: inherit;
  font-feature-settings: inherit;
  color: inherit;
  background: none;
  border: 0;
  padding: 0;
  margin: 0;
  outline: 0;
}

button {
  display: flex;
  align-items: center;
  justify-content: center;
  white-space: nowrap;
}

ul { list-style: none; margin: 0; padding: 0; }
h1, h2, h3 { margin: 0; font-size: inherit; font-weight: inherit; }

.sprite { position: absolute; width: 0; height: 0; }
.icon { width: 14px; height: 14px; flex: none; display: block; overflow: visible; }
.icon.big { width: 16px; height: 16px; }
.icon.tall { width: 15px; height: 17px; }
.push { margin-left: auto; }

/* Title bar */
.titlebar {
  flex: none;
  height: 23px;
  display: flex;
  align-items: center;
  padding-left: 3px;
  background: #202020;
  color: #fff;
  font-family: "Noto Sans", sans-serif;
  font-size: 11px;
}
.window-title { margin: 0 auto 0 7px; }
.win-btn { width: 46px; height: 20px; align-self: flex-start; }

/* Menu bar */
.menubar {
  flex: none;
  height: 44px;
  display: grid;
  grid-template-columns: 1fr auto 1fr;
  align-items: center;
}
.menus { display: flex; gap: 16px; padding: 0 0 2px 10px; }
.screens { display: flex; gap: 22px; font-size: 16px; font-weight: 600; color: #b8b8b8; }
.screens button { gap: 5px; }
.screens .active { color: #569eff; }
.runbar { display: flex; gap: 4px; justify-content: flex-end; padding-right: 11px; }
.run-gap { width: 0; }

/* Columns */
.workspace {
  flex: 1;
  min-height: 0;
  display: grid;
  grid-template-columns: 280px minmax(0, 1fr) 280px;
  gap: 3px;
  padding: 0 3px 2px 4px;
}
.column { display: flex; flex-direction: column; gap: 3px; min-height: 0; }
.dock { flex: 1 1 0; min-height: 0; display: flex; flex-direction: column; }
.dock-body {
  flex: 1;
  min-height: 0;
  display: flex;
  flex-direction: column;
  background: #292929;
  border-radius: 0 0 4px 4px;
}

.tabs { flex: none; height: 32px; display: flex; align-items: center; padding-right: 3px; }
.tab { height: 32px; padding: 0 16px; color: #8a8a8a; }
.tab.active { background: #292929; color: #d0d0d0; border-radius: 4px 4px 0 0; }
.scene-tab { display: flex; align-items: center; gap: 5px; padding: 0 17px; }
.scene-tab > .icon { color: #5fdc6e; }
.close { margin-left: 8px; color: #fff; }
.add-tab { margin-left: 6px; }

.tool { width: 28px; height: 29px; padding-bottom: 1px; flex: none; border-radius: 4px; color: #c8c8c8; }
.tool.on { background: #434343; color: #569eff; }
.tool.off, .nav.off { color: #6c6c6c; }
.tool.faint { color: #666; }
.tool.ghost { color: #484848; }
.nav { width: 20px; height: 29px; padding-bottom: 1px; flex: none; }
.nav.joined { margin-left: -4px; }

.dock-row { flex: none; display: flex; align-items: center; gap: 4px; padding: 0 6px; }
.dock-row.first { margin-top: 6px; }
.dock-row.inset { margin-top: 4px; }
.field {
  flex: 1;
  min-width: 0;
  height: 29px;
  display: flex;
  align-items: center;
  padding: 0 9px 1px 8px;
  background: #1d1d1d;
  border-radius: 4px;
}
.field input { flex: 1; min-width: 0; }
.field input::placeholder { color: #6b6b6b; opacity: 1; }
.field.dimmed { background: #222; }
.field.dimmed .icon { color: #858585; }

/* Trees */
.tree { flex: 1; min-height: 0; overflow: hidden; position: relative; }
.scene-tree { padding-top: 14px; margin-bottom: 10px; }
.file-tree { padding-top: 14px; }
.tree li { height: 22px; display: flex; align-items: center; padding-right: 20px; }
.tree li > .icon:not(.arrow):not(.eye) { margin-right: 7px; }
.tree .arrow { width: 14px; height: 14px; margin-right: 4px; flex: none; color: #7d7d7d; }
.tree .eye { margin-left: auto; color: #e0e0e0; }
.tree .node { color: #68fd7e; }
.tree .folder { color: #79a4e2; }
.tree .light { color: #e0e0e0; }
.d0 { padding-left: 5px; }
.d1 { padding-left: 17px; }
.d2 { padding-left: 29px; }
.d3 { padding-left: 41px; }
.d4 { padding-left: 53px; }
.d5 { padding-left: 65px; }
.picked {
  margin: 0 15px 0 54px;
  padding-left: 5px;
  background: #4b4b4b;
  border-radius: 4px;
  color: #f2f2f2;
}
.guides { position: absolute; left: 0; top: 0; }
.vbar { position: absolute; right: 4px; width: 6px; border-radius: 3px; background: #555; }
.scene-vbar { top: 4px; height: 101px; }
.file-vbar { top: 4px; height: 315px; }
.hbar { flex: none; width: 247px; height: 6px; margin: -10px 0 4px; border-radius: 3px; background: #666; }

/* 2D editor */
.editor { flex: 1; min-height: 0; display: flex; flex-direction: column; }
.editor .tabs { padding-right: 1px; }
.editor .push { margin-right: 4px; }
.toolbar { flex: none; height: 41px; display: flex; align-items: center; gap: 4px; padding: 0 4px; background: #292929; }
.sep { width: 8px; height: 21px; flex: none; border-left: 3px solid transparent; border-right: 3px solid transparent; background: #1a1a1a; background-clip: padding-box; }
.view-btn { width: 45px; height: 29px; padding-bottom: 1px; }

.viewport { flex: 1; min-height: 0; display: grid; grid-template: 16px minmax(0, 1fr) / 16px minmax(0, 1fr); }
.corner { background: #828282; }
.ruler { display: block; width: 100%; height: 100%; background: #252525; fill: #7c7c7c; }
.ruler-x { border-top: 2px solid #323232; }
.ruler-y { border-left: 2px solid #323232; }
.ruler text { fill: #bdbdbd; font: 9px "Open Sans", sans-serif; }
.ruler .origin { fill: #4d6a1c; }
.canvas { position: relative; overflow: hidden; background: #4d4d4d; border: solid #585858; border-width: 0 2px 2px 0; }
.axis-x { position: absolute; left: 0; right: -2px; top: 109px; height: 2px; background: #cf3a50; }
.axis-y { position: absolute; top: 0; bottom: -2px; left: 153px; width: 2px; background: #7fb41a; }

.scene-frame {
  position: absolute;
  left: 153px;
  top: 109px;
  width: 868px;
  height: 489px;
  display: flex;
  gap: 3px;
  padding: 14px;
  border: 2px solid #59579c;
  border-top-color: #a5479a;
  border-left-color: #6f9a79;
  color: #e6e6e6;
  font: 600 12px/20px "Open Sans", sans-serif;
  font-feature-settings: normal;
}
.game-panel { background: #2e2e2e; border-radius: 2px; display: flex; flex-direction: column; }
.creator { width: 368px; }
.creator h1 { font-size: 15px; line-height: 24px; text-align: center; }
.creator input { height: 23px; padding: 3px 3px 0; background: #222; border-bottom: 2px solid #181818; border-radius: 2px; font-weight: 400; }
.creator input::placeholder { color: #8e8e8e; opacity: 1; }
.options { height: 307px; margin-top: 2px; display: flex; flex-direction: column; }
.opt { flex: 1; display: flex; flex-direction: column; padding-bottom: 2px; }
.opt label { flex: 1; padding-top: 1px; }
.pick { position: relative; height: 15px; display: flex; }
.pick select { flex: 1; appearance: none; background: #222; border-radius: 2px; }
.pick .icon { position: absolute; right: 1px; top: 1px; color: #aaa; }

.sheet { flex: 1; }
.sheet i { width: 1px; flex: none; background: #808080; }
.sheet .blank { background: none; }
.sheet-title { height: 23px; text-align: center; border-bottom: 1px solid #808080; }
.facts { display: flex; gap: 4px; padding: 3px 0; height: 26px; line-height: 20px; border-bottom: 1px solid #808080; }
.facts + .facts { border-bottom-color: transparent; }
.facts span { flex: 1 1 0; min-width: 0; }
.feat { height: 27px; line-height: 27px; border-bottom: 1px solid #808080; }
.rule-gap { height: 6px; border-bottom: 1px solid #808080; }
.attributes { height: 26px; line-height: 26px; text-align: center; border-bottom: 1px solid #808080; }
.halves { display: flex; gap: 4px; height: 104px; padding: 3px 0; }
.half { flex: 1 1 0; }
.half h3 { text-align: center; }
.pairs { display: grid; grid-template-columns: 1fr 1fr; column-gap: 4px; font-size: 10px; line-height: 18px; padding-top: 5px; }
.pairs.wide { row-gap: 6px; }
.skills-title { margin-top: 3px; text-align: center; }
.skills { display: grid; grid-template-columns: 1fr 1fr 1fr; column-gap: 4px; font-size: 10px; line-height: 18px; padding-bottom: 3px; border-bottom: 1px solid #808080; }
.traits { padding-top: 3px; }

.zoom { position: absolute; left: 7px; top: 6px; display: flex; align-items: center; text-shadow: 0 0 2px #222; color: #e8e8e8; }
.zoom button { width: 28px; height: 29px; }
.zoom button:nth-child(2) { margin-left: 8px; }
.zoom .zoom-value { width: 70px; font-size: 16px; }
.zoom button .icon { filter: drop-shadow(0 0 1px #222); }
.canvas-vbar { position: absolute; right: 2px; top: 172px; width: 6px; height: 245px; border-radius: 3px; background: #757575; }
.canvas-hbar { position: absolute; left: 426px; bottom: 2px; width: 542px; height: 6px; border-radius: 3px; background: #757575; }

/* Bottom panel */
.bottom { flex: none; height: 270px; padding: 6px 4px 4px; display: flex; flex-direction: column; gap: 4px; background: #292929; border-radius: 4px; }
.log { flex: 1; background: #1f1f1f; border-radius: 4px; }
.log-tools { height: 33px; display: flex; align-items: center; gap: 4px; padding-left: 2px; }
.log-tools .tool + .tool { margin-left: 4px; }
.log-tools .field { height: 33px; margin-left: 2px; padding-bottom: 2px; }
.count { width: 58px; height: 33px; padding: 0 0 2px 9px; gap: 12px; justify-content: flex-start; border-radius: 4px; }
.count.on { background: #434343; color: #e0e0e0; }
.dim { color: #7c7c7c; }
.bottom-tabs { height: 32px; display: flex; align-items: center; gap: 4px; padding-right: 2px; }
.btab { height: 32px; padding: 0 8px; border-radius: 4px; }
.btab.on { background: #434343; color: #e6e6e6; }
.version { padding-right: 6px; color: #8a8a8a; }
.spaced { margin-left: 4px; }

/* Inspector */
.inspector { padding-top: 7px; gap: 4px; }
.object { flex: 1; height: 33px; background: #3a3a3a; border-radius: 4px; }
.resource-row { height: 23px; }
.tab-scroll { display: flex; gap: 2px; margin-right: 3px; color: #c8c8c8; }
.tab-scroll .mid { color: #777; }
```

FILE: rulers.js
```js
// Draws the canvas rulers: a tick every 10 units, labels every 100.
const ZOOM = 0.751;
const ORIGIN = { x: 153, y: 109 };
const NS = "http://www.w3.org/2000/svg";

function add(svg, name, attrs, text) {
  const el = document.createElementNS(NS, name);
  for (const key in attrs) el.setAttribute(key, attrs[key]);
  if (text !== undefined) el.textContent = text;
  svg.appendChild(el);
}

function draw(svg, axis) {
  svg.replaceChildren();
  const horizontal = axis === "x";
  const length = horizontal ? svg.clientWidth : svg.clientHeight;
  const depth = 14;
  const first = Math.ceil(-ORIGIN[axis] / ZOOM / 10);
  for (let n = first; ; n++) {
    const pos = Math.round(ORIGIN[axis] + n * 10 * ZOOM);
    if (pos >= length) break;
    const size = n % 10 === 0 ? 16 : n % 5 === 0 ? 11 : 4;
    const rect = horizontal
      ? { x: pos, y: depth - size, width: 1, height: size }
      : { x: depth - size, y: pos, width: size, height: 1 };
    if (n === 0 && horizontal) rect.class = "origin";
    add(svg, "rect", rect);
    if (n % 10 === 0) {
      const label = String(n * 10);
      if (horizontal) add(svg, "text", { x: pos + 3, y: 7 }, label);
      else add(svg, "text", { transform: `translate(7 ${pos - 2}) rotate(-90)` }, label);
    }
  }
}

function drawAll() {
  draw(document.getElementById("ruler-x"), "x");
  draw(document.getElementById("ruler-y"), "y");
}

drawAll();
addEventListener("resize", drawAll);
```
